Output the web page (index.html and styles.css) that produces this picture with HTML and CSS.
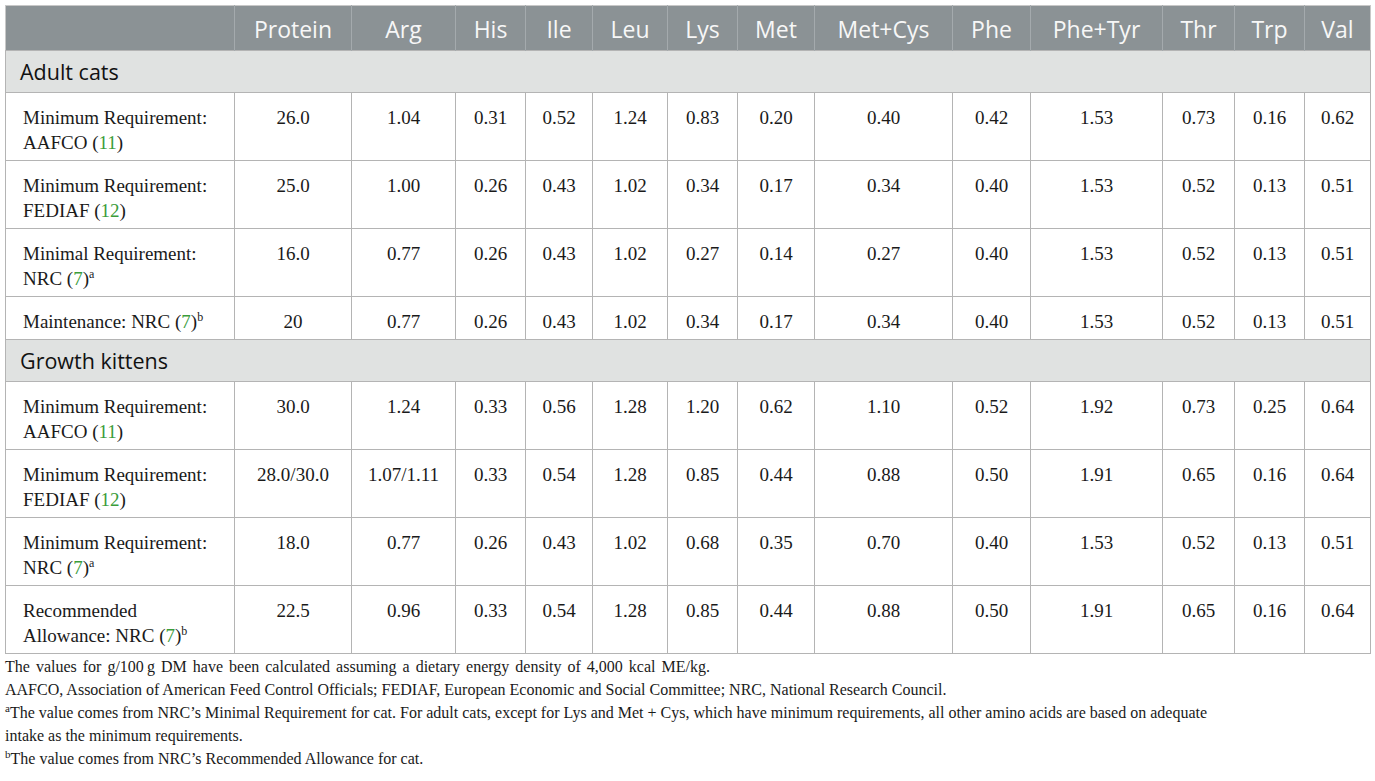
FILE: index.html
```html
<!DOCTYPE html>
<html lang="en">
<head>
    <meta charset="UTF-8">
    <title>Amino acid requirements for cats</title>
    <link rel="stylesheet" href="styles.css">
</head>
<body>
    <table class="aa-table">
        <colgroup>
            <col style="width:229px">
            <col style="width:117px">
            <col style="width:104px">
            <col style="width:70px">
            <col style="width:67px">
            <col style="width:75px">
            <col style="width:70px">
            <col style="width:77px">
            <col style="width:138px">
            <col style="width:78px">
            <col style="width:132px">
            <col style="width:72px">
            <col style="width:70px">
            <col style="width:66px">
        </colgroup>
        <thead>
            <tr>
                <th></th>
                <th>Protein</th>
                <th>Arg</th>
                <th>His</th>
                <th>Ile</th>
                <th>Leu</th>
                <th>Lys</th>
                <th>Met</th>
                <th>Met+Cys</th>
                <th>Phe</th>
                <th>Phe+Tyr</th>
                <th>Thr</th>
                <th>Trp</th>
                <th>Val</th>
            </tr>
        </thead>
        <tbody>
            <tr class="section"><td colspan="14">Adult cats</td></tr>
            <tr>
                <td>Minimum Requirement: AAFCO (<a href="#">11</a>)</td>
                <td>26.0</td><td>1.04</td><td>0.31</td><td>0.52</td><td>1.24</td><td>0.83</td><td>0.20</td><td>0.40</td><td>0.42</td><td>1.53</td><td>0.73</td><td>0.16</td><td>0.62</td>
            </tr>
            <tr>
                <td>Minimum Requirement: FEDIAF (<a href="#">12</a>)</td>
                <td>25.0</td><td>1.00</td><td>0.26</td><td>0.43</td><td>1.02</td><td>0.34</td><td>0.17</td><td>0.34</td><td>0.40</td><td>1.53</td><td>0.52</td><td>0.13</td><td>0.51</td>
            </tr>
            <tr>
                <td>Minimal Requirement: NRC (<a href="#">7</a>)<sup>a</sup></td>
                <td>16.0</td><td>0.77</td><td>0.26</td><td>0.43</td><td>1.02</td><td>0.27</td><td>0.14</td><td>0.27</td><td>0.40</td><td>1.53</td><td>0.52</td><td>0.13</td><td>0.51</td>
            </tr>
            <tr>
                <td>Maintenance: NRC (<a href="#">7</a>)<sup>b</sup></td>
                <td>20</td><td>0.77</td><td>0.26</td><td>0.43</td><td>1.02</td><td>0.34</td><td>0.17</td><td>0.34</td><td>0.40</td><td>1.53</td><td>0.52</td><td>0.13</td><td>0.51</td>
            </tr>
            <tr class="section"><td colspan="14">Growth kittens</td></tr>
            <tr>
                <td>Minimum Requirement: AAFCO (<a href="#">11</a>)</td>
                <td>30.0</td><td>1.24</td><td>0.33</td><td>0.56</td><td>1.28</td><td>1.20</td><td>0.62</td><td>1.10</td><td>0.52</td><td>1.92</td><td>0.73</td><td>0.25</td><td>0.64</td>
            </tr>
            <tr>
                <td>Minimum Requirement: FEDIAF (<a href="#">12</a>)</td>
                <td>28.0/30.0</td><td>1.07/1.11</td><td>0.33</td><td>0.54</td><td>1.28</td><td>0.85</td><td>0.44</td><td>0.88</td><td>0.50</td><td>1.91</td><td>0.65</td><td>0.16</td><td>0.64</td>
            </tr>
            <tr>
                <td>Minimum Requirement: NRC (<a href="#">7</a>)<sup>a</sup></td>
                <td>18.0</td><td>0.77</td><td>0.26</td><td>0.43</td><td>1.02</td><td>0.68</td><td>0.35</td><td>0.70</td><td>0.40</td><td>1.53</td><td>0.52</td><td>0.13</td><td>0.51</td>
            </tr>
            <tr>
                <td>Recommended Allowance: NRC (<a href="#">7</a>)<sup>b</sup></td>
                <td>22.5</td><td>0.96</td><td>0.33</td><td>0.54</td><td>1.28</td><td>0.85</td><td>0.44</td><td>0.88</td><td>0.50</td><td>1.91</td><td>0.65</td><td>0.16</td><td>0.64</td>
            </tr>
        </tbody>
    </table>

    <div class="notes">
        <p class="note-wide">The values for g/100&#8201;g DM have been calculated assuming a dietary energy density of 4,000 kcal ME/kg.</p>
        <p>AAFCO, Association of American Feed Control Officials; FEDIAF, European Economic and Social Committee; NRC, National Research Council.</p>
        <p><sup>a</sup>The value comes from NRC’s Minimal Requirement for cat. For adult cats, except for Lys and Met + Cys, which have minimum requirements, all other amino acids are based on adequate intake as the minimum requirements.</p>
        <p><sup>b</sup>The value comes from NRC’s Recommended Allowance for cat.</p>
    </div>
</body>
</html>
```

FILE: styles.css
```css
body {
    margin: 0;
    padding: 5px;
    background-color: #ffffff;
    font-family: "Liberation Serif", "Times New Roman", serif;
    color: #1a1a1a;
}
.aa-table {
    width: 1366px;
    table-layout: fixed;
    border-collapse: collapse;
    border: 1px solid #c8c8c8;
}
.aa-table th {
    background-color: #8b9295;
    color: #f7f7f7;
    font-family: "Open Sans", "Liberation Sans", sans-serif;
    font-weight: normal;
    font-size: 23px;
    line-height: 28px;
    padding: 9px 2px 7px 2px;
    border-left: 1px solid #a4aaad;
    text-align: center;
}
.aa-table th:first-child {
    border-left: none;
}
.aa-table td {
    font-size: 19px;
    line-height: 25px;
    padding: 12px 4px 5px 4px;
    border: 1px solid #b4b4b4;
    text-align: center;
    vertical-align: top;
}
.aa-table td:first-child {
    text-align: left;
    padding-left: 17px;
    padding-right: 8px;
}
.aa-table .section td {
    background-color: #e0e2e1;
    font-family: "Open Sans", "Liberation Sans", sans-serif;
    font-size: 21.5px;
    line-height: 25px;
    padding: 8px 4px 8px 14px;
    color: #111;
}
.aa-table a {
    color: #3a9c3a;
    text-decoration: none;
}
sup {
    font-size: 12px;
    line-height: 0;
    vertical-align: 7px;
}
.notes {
    font-size: 16px;
    line-height: 23px;
    max-width: 1240px;
    padding-top: 1px;
}
.notes p {
    margin: 0;
}
.note-wide {
    word-spacing: 2px;
}
.notes sup {
    font-size: 11px;
    vertical-align: 6px;
}
```
